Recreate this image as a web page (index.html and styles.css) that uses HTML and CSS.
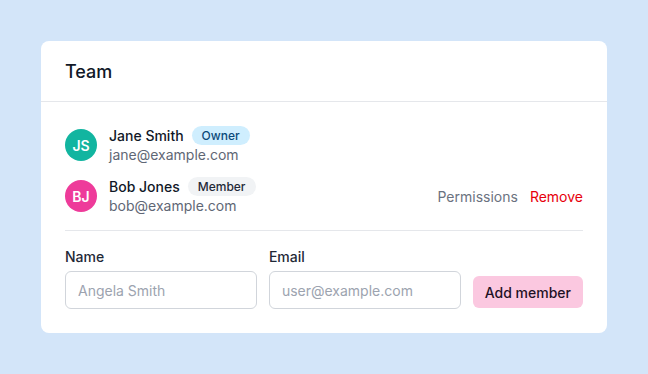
FILE: index.html
```html
<!DOCTYPE html>
<html>
<head>
<meta charset="utf-8">
<link rel="stylesheet" href="styles.css">
</head>
<body>
<div class="card">
  <div class="card-header">Team</div>
  <div class="card-body">
    <div class="members">
      <div class="member">
        <div class="avatar teal">JS</div>
        <div class="info">
          <div class="name-line"><span class="name">Jane Smith</span><span class="badge owner">Owner</span></div>
          <div class="email">jane@example.com</div>
        </div>
      </div>
      <div class="member">
        <div class="avatar pink">BJ</div>
        <div class="info">
          <div class="name-line"><span class="name">Bob Jones</span><span class="badge member-badge">Member</span></div>
          <div class="email">bob@example.com</div>
        </div>
        <div class="actions">
          <span class="perm">Permissions</span>
          <span class="remove">Remove</span>
        </div>
      </div>
    </div>
    <div class="form">
      <div class="field">
        <label class="label">Name</label>
        <input class="input" placeholder="Angela Smith">
      </div>
      <div class="field">
        <label class="label">Email</label>
        <input class="input" placeholder="user@example.com">
      </div>
      <button class="btn">Add member</button>
    </div>
  </div>
</div>
</body>
</html>
```
FILE: styles.css
```css
* { box-sizing: border-box; }
html, body { margin: 0; padding: 0; }
body {
  background: #d3e5f9;
  font-family: Inter, "Noto Sans", sans-serif;
  color: #111827;
  padding: 41px;
}
.card {
  width: 566px;
  background: #ffffff;
  border-radius: 8px;
}
.card-header {
  height: 61px;
  display: flex;
  align-items: center;
  padding: 0 24px;
  font-size: 18px;
  font-weight: 500;
  color: #111827;
  border-bottom: 1px solid #e5e7eb;
}
.card-body {
  padding: 23px 24px 24px;
}
.members {
  display: flex;
  flex-direction: column;
  gap: 11px;
  padding-bottom: 14px;
  border-bottom: 1px solid #e5e7eb;
}
.member {
  display: flex;
  align-items: center;
  gap: 12px;
}
.avatar {
  width: 32px;
  height: 32px;
  border-radius: 50%;
  display: flex;
  align-items: center;
  justify-content: center;
  color: #fff;
  font-size: 14px;
  font-weight: 600;
  flex: none;
}
.teal { background: #12b5a0; }
.pink { background: #ee3b9a; }
.info { flex: 1; }
.name-line {
  display: flex;
  align-items: center;
  gap: 8px;
  height: 20px;
}
.name {
  font-size: 14px;
  font-weight: 500;
  color: #111827;
}
.badge {
  font-size: 12px;
  font-weight: 500;
  line-height: 19px;
  height: 19px;
  padding: 0 10px;
  border-radius: 10px;
}
.owner { background: #cfeefe; color: #0b4a7a; }
.member-badge { background: #f1f3f5; color: #1f2937; }
.email {
  font-size: 14px;
  line-height: 20px;
  color: #5f6775;
}
.actions {
  display: flex;
  gap: 12px;
  font-size: 14px;
}
.perm { color: #6b7280; }
.remove { color: #e7000b; }
.form {
  display: flex;
  align-items: flex-end;
  gap: 12px;
  padding-top: 16px;
}
.field {
  flex: 1;
  display: flex;
  flex-direction: column;
  gap: 4px;
}
.label {
  font-size: 14px;
  font-weight: 500;
  line-height: 20px;
  color: #1f2937;
}
.input {
  height: 38px;
  border: 1px solid #d1d5db;
  border-radius: 6px;
  padding: 0 12px;
  font-family: inherit;
  font-size: 14px;
  color: #111827;
  width: 100%;
}
.input::placeholder { color: #9ca3af; }
.btn {
  height: 32px;
  padding: 0 12px;
  border: none;
  border-radius: 6px;
  background: #fbc8e0;
  color: #1f1125;
  font-family: inherit;
  font-size: 14px;
  font-weight: 500;
  margin-bottom: 1px;
}
```
